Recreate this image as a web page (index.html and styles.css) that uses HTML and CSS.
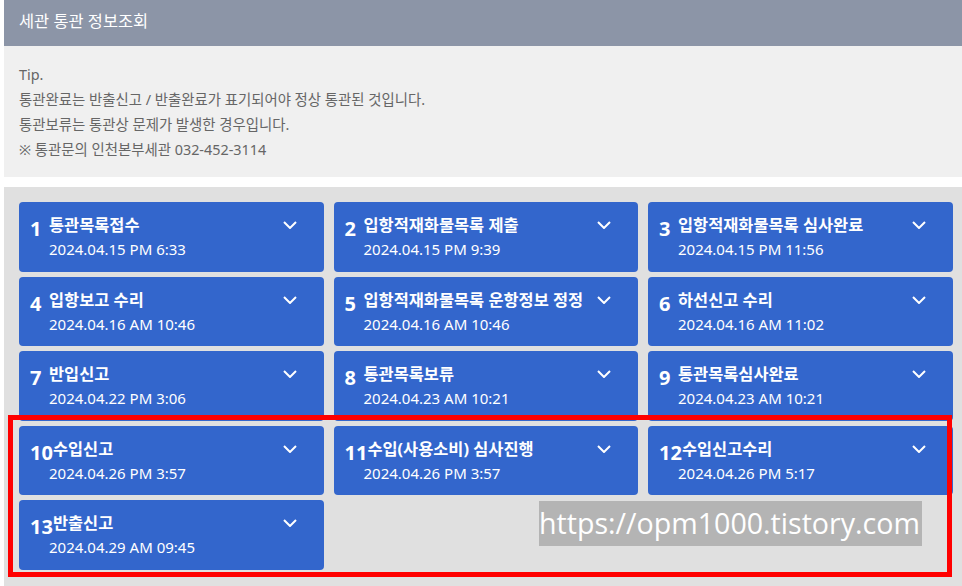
FILE: index.html
```html
<!DOCTYPE html>
<html lang="ko">
<head>
<meta charset="utf-8">
<title>세관 통관 정보조회</title>
<link rel="stylesheet" href="styles.css">
</head>
<body>
<div class="page">
  <div class="header">세관 통관 정보조회</div>
  <div class="tip">
    <p>Tip.</p>
    <p>통관완료는 반출신고 / 반출완료가 표기되어야 정상 통관된 것입니다.</p>
    <p>통관보류는 통관상 문제가 발생한 경우입니다.</p>
    <p>※ 통관문의 인천본부세관 032-452-3114</p>
  </div>
  <div class="grid">
    <div class="card"><div class="head"><span class="num">1</span><span class="title">통관목록접수</span><svg class="chev" viewBox="0 0 14 8"><path d="M1 1 L7 7 L13 1"/></svg></div><div class="date">2024.04.15 PM 6:33</div></div>
    <div class="card"><div class="head"><span class="num">2</span><span class="title">입항적재화물목록 제출</span><svg class="chev" viewBox="0 0 14 8"><path d="M1 1 L7 7 L13 1"/></svg></div><div class="date">2024.04.15 PM 9:39</div></div>
    <div class="card"><div class="head"><span class="num">3</span><span class="title">입항적재화물목록 심사완료</span><svg class="chev" viewBox="0 0 14 8"><path d="M1 1 L7 7 L13 1"/></svg></div><div class="date">2024.04.15 PM 11:56</div></div>
    <div class="card"><div class="head"><span class="num">4</span><span class="title">입항보고 수리</span><svg class="chev" viewBox="0 0 14 8"><path d="M1 1 L7 7 L13 1"/></svg></div><div class="date">2024.04.16 AM 10:46</div></div>
    <div class="card"><div class="head"><span class="num">5</span><span class="title">입항적재화물목록 운항정보 정정</span><svg class="chev" viewBox="0 0 14 8"><path d="M1 1 L7 7 L13 1"/></svg></div><div class="date">2024.04.16 AM 10:46</div></div>
    <div class="card"><div class="head"><span class="num">6</span><span class="title">하선신고 수리</span><svg class="chev" viewBox="0 0 14 8"><path d="M1 1 L7 7 L13 1"/></svg></div><div class="date">2024.04.16 AM 11:02</div></div>
    <div class="card"><div class="head"><span class="num">7</span><span class="title">반입신고</span><svg class="chev" viewBox="0 0 14 8"><path d="M1 1 L7 7 L13 1"/></svg></div><div class="date">2024.04.22 PM 3:06</div></div>
    <div class="card"><div class="head"><span class="num">8</span><span class="title">통관목록보류</span><svg class="chev" viewBox="0 0 14 8"><path d="M1 1 L7 7 L13 1"/></svg></div><div class="date">2024.04.23 AM 10:21</div></div>
    <div class="card"><div class="head"><span class="num">9</span><span class="title">통관목록심사완료</span><svg class="chev" viewBox="0 0 14 8"><path d="M1 1 L7 7 L13 1"/></svg></div><div class="date">2024.04.23 AM 10:21</div></div>
    <div class="card"><div class="head"><span class="num">10</span><span class="title">수입신고</span><svg class="chev" viewBox="0 0 14 8"><path d="M1 1 L7 7 L13 1"/></svg></div><div class="date">2024.04.26 PM 3:57</div></div>
    <div class="card"><div class="head"><span class="num">11</span><span class="title">수입(사용소비) 심사진행</span><svg class="chev" viewBox="0 0 14 8"><path d="M1 1 L7 7 L13 1"/></svg></div><div class="date">2024.04.26 PM 3:57</div></div>
    <div class="card"><div class="head"><span class="num">12</span><span class="title">수입신고수리</span><svg class="chev" viewBox="0 0 14 8"><path d="M1 1 L7 7 L13 1"/></svg></div><div class="date">2024.04.26 PM 5:17</div></div>
    <div class="card"><div class="head"><span class="num">13</span><span class="title">반출신고</span><svg class="chev" viewBox="0 0 14 8"><path d="M1 1 L7 7 L13 1"/></svg></div><div class="date">2024.04.29 AM 09:45</div></div>
  </div>
  <div class="highlight"></div>
  <div class="watermark">https://opm1000.tistory.com</div>
</div>
</body>
</html>
```
FILE: styles.css
```css
* { box-sizing: border-box; }
html, body { margin: 0; padding: 0; background: #ffffff; }
body {
  font-family: "Noto Sans", "Noto Sans CJK KR", sans-serif;
  width: 962px;
  height: 586px;
  overflow: hidden;
}
.page {
  position: relative;
  margin-left: 4px;
}
.header {
  height: 46px;
  background: #8c95a7;
  color: #ffffff;
  font-size: 16.4px;
  line-height: 42px;
  padding-left: 15px;
}
.tip {
  background: #f0f0f0;
  height: 131px;
  padding: 16px 15px 0;
  color: #666666;
  font-size: 14.4px;
  line-height: 25px;
}
.tip p { margin: 0; }
.grid {
  margin-top: 10px;
  background: #e0e0e0;
  padding: 15px 0 15px 15px;
  display: grid;
  grid-template-columns: repeat(3, 304.5px);
  grid-auto-rows: 69.5px;
  column-gap: 10px;
  row-gap: 5px;
  height: 400px;
}
.card {
  background: #3366cc;
  border-radius: 4px;
  display: flex;
  flex-direction: column;
  padding: 11px 0 0 11px;
  color: #ffffff;
}
.head {
  display: flex;
  align-items: flex-start;
  height: 24px;
}
.num {
  min-width: 19px;
  flex: none;
  font-size: 20px;
  font-weight: 700;
  line-height: 28px;
  white-space: nowrap;
  margin-top: 2px;
}
.title {
  flex: 1;
  min-width: 0;
  font-size: 16.4px;
  font-weight: 700;
  line-height: 24px;
  white-space: nowrap;
}
.date {
  padding-left: 19px;
  font-size: 15px;
  line-height: 24px;
  white-space: nowrap;
}
.chev {
  flex: none;
  width: 14px;
  height: 8px;
  margin: 8px 27px 0 4px;
  fill: none;
  stroke: #ffffff;
  stroke-width: 2;
}
.highlight {
  position: absolute;
  left: 4px;
  top: 415px;
  width: 944px;
  height: 162px;
  border: 5px solid #ff0000;
}
.watermark {
  position: absolute;
  left: 535px;
  top: 501px;
  width: 383px;
  height: 45px;
  background: #b4b4b4;
  color: #ffffff;
  font-family: "Open Sans", sans-serif;
  font-size: 28.6px;
  line-height: 44px;
  white-space: nowrap;
}
```
